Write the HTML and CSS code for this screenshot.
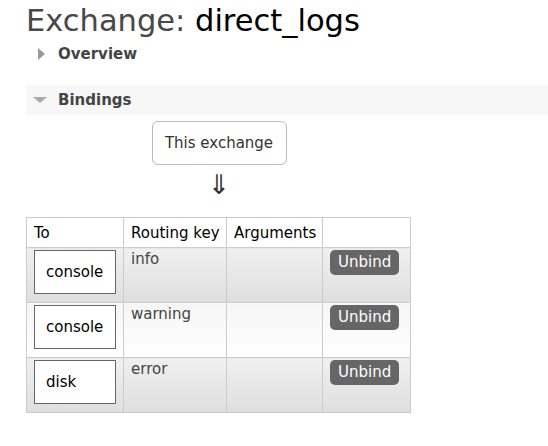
FILE: index.html
```html
<!DOCTYPE html>
<html>
<head>
<meta charset="utf-8">
<link rel="stylesheet" href="styles.css">
</head>
<body>
<div class="page">
  <h1 class="title"><span class="title-label">Exchange:</span> <span class="title-name">direct_logs</span></h1>
  <div class="section">
    <div class="section-head collapsed"><span class="tri tri-right"></span><span class="section-name">Overview</span></div>
  </div>
  <div class="section">
    <div class="section-head open"><span class="tri tri-down"></span><span class="section-name">Bindings</span></div>
    <div class="bindings">
      <div class="source-wrap">
        <div class="source-box">This exchange</div>
        <div class="arrow">⇓</div>
      </div>
      <table class="list">
        <colgroup>
          <col class="c-to">
          <col class="c-key">
          <col class="c-args">
          <col class="c-act">
        </colgroup>
        <thead>
          <tr><th>To</th><th>Routing key</th><th>Arguments</th><th></th></tr>
        </thead>
        <tbody>
          <tr class="alt1">
            <td class="to"><span class="dest">console</span></td>
            <td class="key">info</td>
            <td></td>
            <td class="act"><span class="btn">Unbind</span></td>
          </tr>
          <tr class="alt2">
            <td class="to"><span class="dest">console</span></td>
            <td class="key">warning</td>
            <td></td>
            <td class="act"><span class="btn">Unbind</span></td>
          </tr>
          <tr class="alt1">
            <td class="to"><span class="dest">disk</span></td>
            <td class="key">error</td>
            <td></td>
            <td class="act"><span class="btn">Unbind</span></td>
          </tr>
        </tbody>
      </table>
    </div>
  </div>
</div>
</body>
</html>
```

FILE: styles.css
```css
html, body {
  margin: 0;
  padding: 0;
  background: #fff;
}
body {
  font-family: "DejaVu Sans", Verdana, sans-serif;
  color: #000;
  overflow: hidden;
}
.page {
  padding: 0 0 0 26px;
}
.title {
  margin: 0;
  padding: 3px 0 0 0;
  font-weight: normal;
  font-size: 30.5px;
  line-height: 36px;
  height: 39px;
}
.title-label { color: #484848; }
.title-name { color: #000; }

.section-head {
  display: flex;
  align-items: center;
  font-weight: bold;
  font-size: 15px;
  color: #444;
}
.section-head.collapsed {
  height: 20px;
  margin-top: 2px;
  padding-left: 12px;
}
.section-head.open {
  margin-top: 21px;
  height: 30px;
  background: #f7f7f7;
  padding-left: 7px;
}
.section-name { margin-left: 13px; }
.section-head.open .section-name { margin-left: 11px; }
.tri {
  display: inline-block;
  width: 0;
  height: 0;
}
.tri-right {
  border-top: 6px solid transparent;
  border-bottom: 6px solid transparent;
  border-left: 7px solid #999;
}
.tri-down {
  border-left: 7px solid transparent;
  border-right: 7px solid transparent;
  border-top: 6px solid #aaa;
}

.bindings {
  padding-top: 6px;
}
.source-wrap {
  width: 384px;
  display: flex;
  flex-direction: column;
  align-items: center;
}
.source-box {
  margin-left: 2px;
  width: 133px;
  height: 42px;
  border: 1px solid #bbb;
  border-radius: 6px;
  display: flex;
  align-items: center;
  justify-content: center;
  font-size: 15px;
  color: #333;
}
.arrow {
  margin-top: 5px;
  font-size: 27px;
  line-height: 30px;
  height: 30px;
  color: #333;
  margin-left: 2px;
}

table.list {
  margin-top: 17px;
  border-collapse: collapse;
  table-layout: fixed;
  width: 384px;
  font-size: 15px;
  white-space: nowrap;
}
col.c-to { width: 97px; }
col.c-key { width: 103px; }
col.c-args { width: 96px; }
col.c-act { width: 88px; }
table.list th, table.list td {
  border: 1px solid #ccc;
  vertical-align: top;
  text-align: left;
}
table.list th {
  font-weight: normal;
  padding: 0 7px;
  height: 29px;
  vertical-align: middle;
  background: #fff;
  color: #000;
}
table.list td {
  height: 50px;
  padding: 2px 7px;
  color: #444;
}
tr.alt1 td { background: linear-gradient(#f0f0f0, #dedede); }
tr.alt2 td { background: linear-gradient(#f5f5f5, #ffffff); }
td.key { padding-top: 2px; }
td.to { padding: 2px 6px 0 7px; }
.dest {
  display: flex;
  align-items: center;
  width: 69px;
  height: 42px;
  padding-left: 11px;
  border: 1px solid #666;
  background: #fff;
  color: #000;
}
.btn {
  display: inline-block;
  background: #666;
  color: #fff;
  border-radius: 5px;
  padding: 0 8px;
  height: 25px;
  line-height: 25px;
}
```
